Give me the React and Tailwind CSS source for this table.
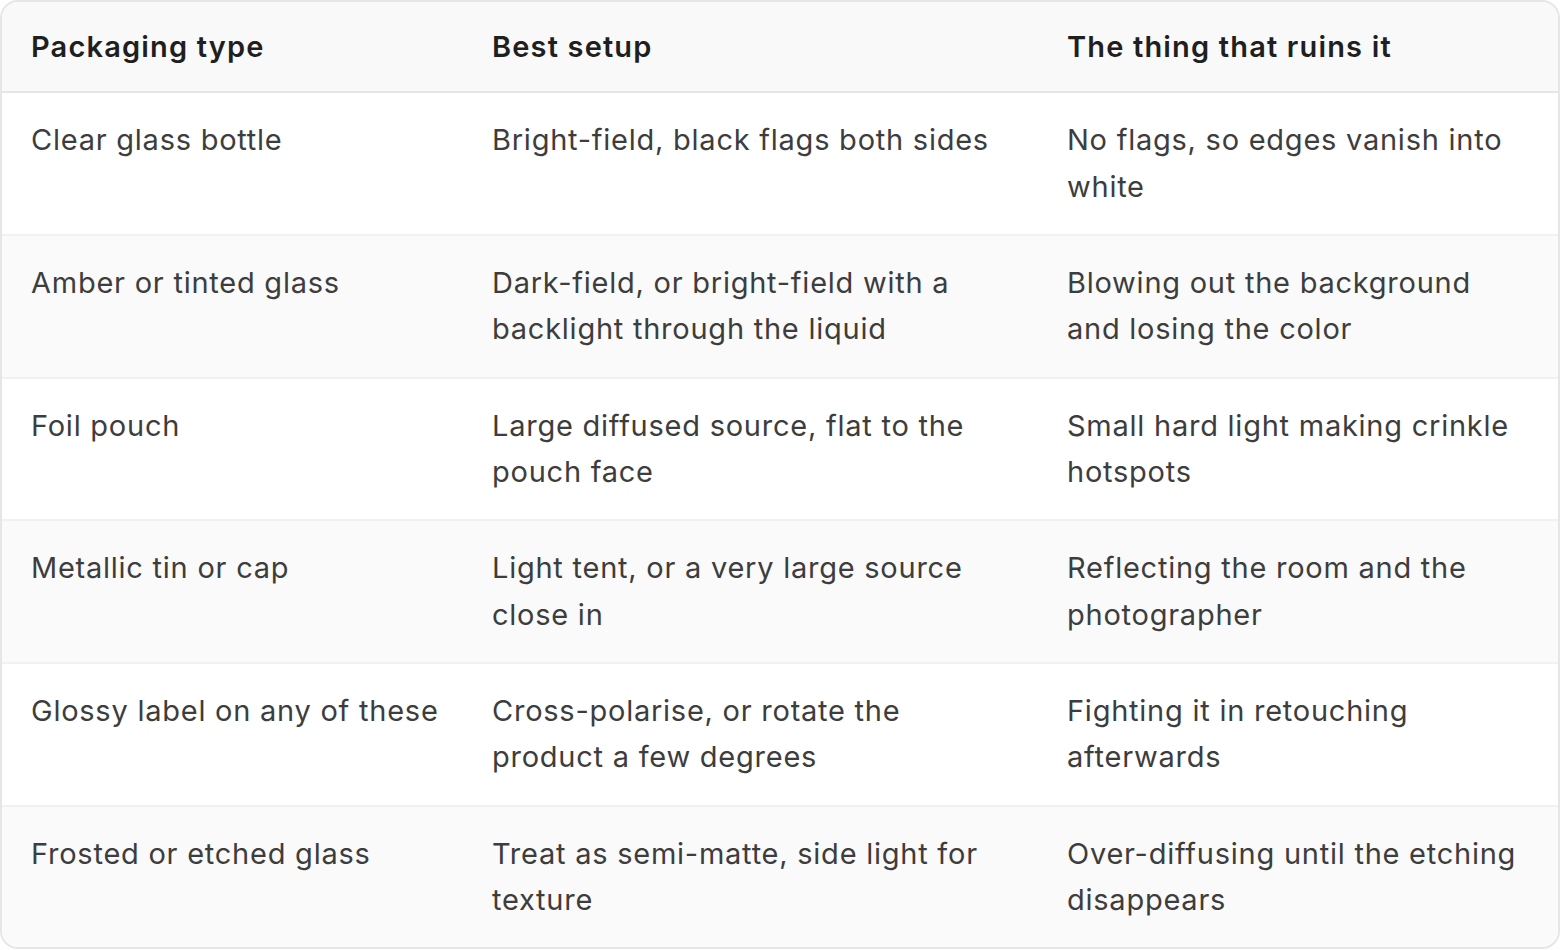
import React from "react";

const rows = [
  ["Clear glass bottle", "Bright-field, black flags both sides", "No flags, so edges vanish into white"],
  ["Amber or tinted glass", "Dark-field, or bright-field with a backlight through the liquid", "Blowing out the background and losing the color"],
  ["Foil pouch", "Large diffused source, flat to the pouch face", "Small hard light making crinkle hotspots"],
  ["Metallic tin or cap", "Light tent, or a very large source close in", "Reflecting the room and the photographer"],
  ["Glossy label on any of these", "Cross-polarise, or rotate the product a few degrees", "Fighting it in retouching afterwards"],
  ["Frosted or etched glass", "Treat as semi-matte, side light for texture", "Over-diffusing until the etching disappears"],
];

const headers = ["Packaging type", "Best setup", "The thing that ruins it"];
const padR = ["pr-[12px]", "pr-[29px]", "pr-[29px]"];

export default function App() {
  return (
    <div className="w-[1560px] h-[950px] bg-white" style={{ fontFamily: "Inter, 'Noto Sans', sans-serif" }}>
      <div className="w-full overflow-hidden rounded-[18px] border-2 border-[#e6e6e6]">
        <table className="w-full table-fixed border-collapse text-[29px] leading-[46.33px]">
          <colgroup>
            <col className="w-[461px]" />
            <col className="w-[575px]" />
            <col />
          </colgroup>
          <thead>
            <tr className="bg-[#f9f9f9] border-b-2 border-[#e6e6e6]">
              {headers.map((h, j) => (
                <th key={j} className={"text-left font-semibold tracking-[0.04em] text-[#1f1f1f] pl-[29px] pt-[22px] pb-[21px] " + padR[j]}>{h}</th>
              ))}
            </tr>
          </thead>
          <tbody>
            {rows.map((r, i) => (
              <tr key={i} className={(i % 2 === 1 ? "bg-[#fafafa]" : "bg-white") + (i < rows.length - 1 ? " border-b-2 border-[#f1f1f1]" : "")}>
                {r.map((c, j) => (
                  <td key={j} className={"align-top text-[#3d3d3d] tracking-[0.026em] pl-[29px] py-[24px] " + padR[j]}>{c}</td>
                ))}
              </tr>
            ))}
          </tbody>
        </table>
      </div>
    </div>
  );
}
